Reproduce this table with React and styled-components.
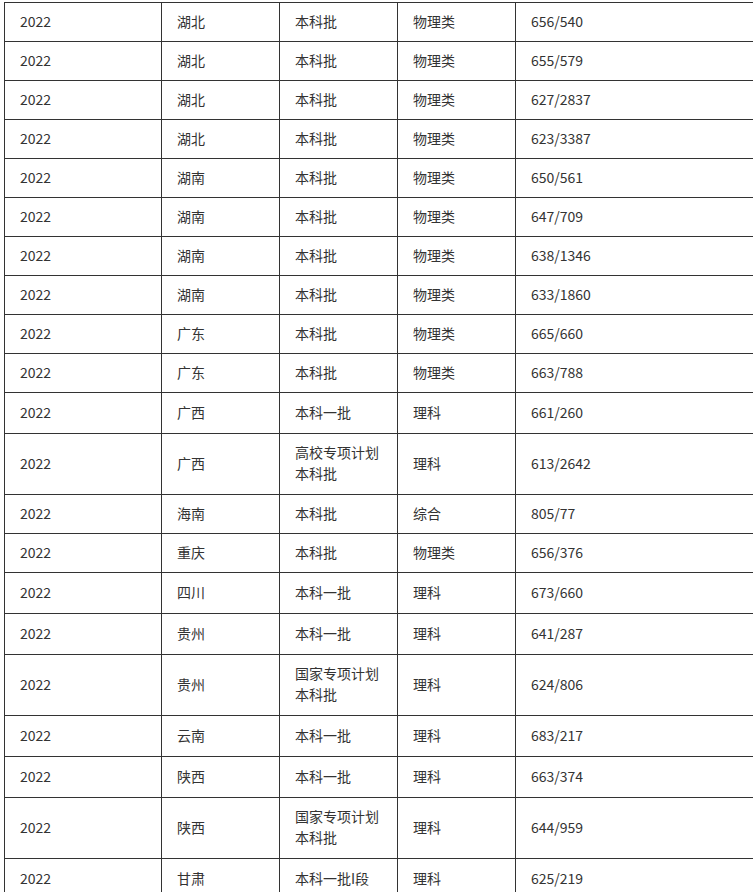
import React from "react";
import styled, { createGlobalStyle } from "styled-components";

const GlobalStyle = createGlobalStyle`
  html, body {
    margin: 0;
    padding: 0;
    overflow: hidden;
    background: #fff;
  }
`;

const columnWidths = [157, 118, 118, 118, 250];

const rows = [
  ["2022", "湖北", ["本科批"], "物理类", "656/540"],
  ["2022", "湖北", ["本科批"], "物理类", "655/579"],
  ["2022", "湖北", ["本科批"], "物理类", "627/2837"],
  ["2022", "湖北", ["本科批"], "物理类", "623/3387"],
  ["2022", "湖南", ["本科批"], "物理类", "650/561"],
  ["2022", "湖南", ["本科批"], "物理类", "647/709"],
  ["2022", "湖南", ["本科批"], "物理类", "638/1346"],
  ["2022", "湖南", ["本科批"], "物理类", "633/1860"],
  ["2022", "广东", ["本科批"], "物理类", "665/660"],
  ["2022", "广东", ["本科批"], "物理类", "663/788"],
  ["2022", "广西", ["本科一批"], "理科", "661/260", 41],
  ["2022", "广西", ["高校专项计划", "本科批"], "理科", "613/2642", 61],
  ["2022", "海南", ["本科批"], "综合", "805/77"],
  ["2022", "重庆", ["本科批"], "物理类", "656/376"],
  ["2022", "四川", ["本科一批"], "理科", "673/660", 41],
  ["2022", "贵州", ["本科一批"], "理科", "641/287", 41],
  ["2022", "贵州", ["国家专项计划", "本科批"], "理科", "624/806", 61],
  ["2022", "云南", ["本科一批"], "理科", "683/217", 41],
  ["2022", "陕西", ["本科一批"], "理科", "663/374", 41],
  ["2022", "陕西", ["国家专项计划", "本科批"], "理科", "644/959", 61],
  ["2022", "甘肃", ["本科一批I段"], "理科", "625/219", 41],
];

const App = () => {
  return (
    <Page>
      <GlobalStyle />
      <Table>
        <colgroup>
          {columnWidths.map((w, i) => (
            <Col key={i} $w={w} />
          ))}
        </colgroup>
        <tbody>
          {rows.map((row, i) => {
            const [year, province, batch, subject, score, height = 39] = row;
            return (
              <tr key={i}>
                <Cell $h={height}>{year}</Cell>
                <Cell $h={height}>{province}</Cell>
                <Cell $h={height}>
                  {batch.map((line, j) => (
                    <Line key={j}>{line}</Line>
                  ))}
                </Cell>
                <Cell $h={height}>{subject}</Cell>
                <Cell $h={height}>{score}</Cell>
              </tr>
            );
          })}
        </tbody>
      </Table>
    </Page>
  );
};

const Page = styled.div`
  width: 753px;
  height: 892px;
  overflow: hidden;
  padding: 2px 0 0 4px;
  box-sizing: border-box;
`;

const Table = styled.table`
  border-collapse: separate;
  border-spacing: 0;
  table-layout: fixed;
  width: 761px;
  border-top: 1px solid #333;
  border-left: 1px solid #333;
  font-family: "Noto Sans CJK SC", "Microsoft YaHei", sans-serif;
  font-size: 14px;
  color: #333;
`;

const Col = styled.col`
  width: ${(p) => p.$w}px;
`;

const Cell = styled.td`
  box-sizing: border-box;
  height: ${(p) => p.$h}px;
  padding: 0 14px 2px 15px;
  border-right: 1px solid #333;
  border-bottom: 1px solid #333;
  vertical-align: middle;
  line-height: 20px;
  white-space: nowrap;
`;

const Line = styled.div`
  line-height: 21px;
`;

export default App;
